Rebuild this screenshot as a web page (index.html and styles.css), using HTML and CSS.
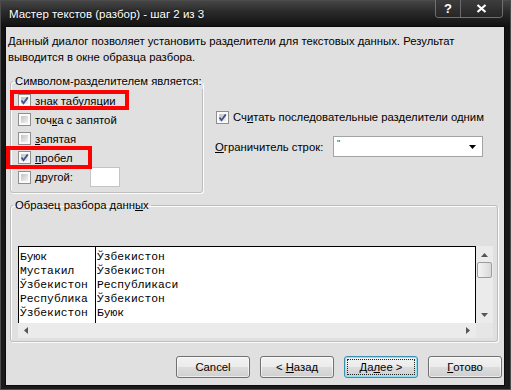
FILE: index.html
```html
<!DOCTYPE html>
<html lang="ru">
<head>
  <meta charset="UTF-8">
  <title>Мастер текстов (разбор) - шаг 2 из 3</title>
  <link rel="stylesheet" href="styles.css">
</head>
<body>
  <div class="window">
    <div class="titlebar">
      <span class="title">Мастер текстов (разбор) - шаг 2 из 3</span>
      <div class="caption">
        <span class="cap-btn help">?</span>
        <span class="cap-btn close">
          <svg width="11" height="9" viewBox="0 0 11 9"><path d="M1.5 1 L9.5 8 M9.5 1 L1.5 8" stroke="#fff" stroke-width="2.2"/></svg>
        </span>
      </div>
    </div>

    <div class="client">
      <p class="intro">Данный диалог позволяет установить разделители для текстовых данных. Результат<br>выводится в окне образца разбора.</p>

      <div class="options">
        <fieldset class="group delimiters">
          <legend>Символом-разделителем является:</legend>
          <div class="check-row">
            <span class="box"><svg viewBox="0 0 13 13"><path d="M3.5 6.5 L5.5 9.2 L9.8 3.4" fill="none" stroke="#3e5590" stroke-width="1.8"/></svg></span>
            <span>знак <u>т</u>абуляции</span>
            <span class="mark mark-tab"></span>
          </div>
          <div class="check-row">
            <span class="box"></span>
            <span>точ<u>к</u>а с запятой</span>
          </div>
          <div class="check-row">
            <span class="box"></span>
            <span><u>з</u>апятая</span>
          </div>
          <div class="check-row">
            <span class="box"><svg viewBox="0 0 13 13"><path d="M3.5 6.5 L5.5 9.2 L9.8 3.4" fill="none" stroke="#3e5590" stroke-width="1.8"/></svg></span>
            <span><u>п</u>робел</span>
            <span class="mark mark-space"></span>
          </div>
          <div class="check-row other">
            <span class="box"></span>
            <span><u>д</u>ругой:</span>
            <span class="other-input"></span>
          </div>
        </fieldset>

        <div class="side">
          <div class="check-row consecutive">
            <span class="box"><svg viewBox="0 0 13 13"><path d="M3.5 6.5 L5.5 9.2 L9.8 3.4" fill="none" stroke="#3e5590" stroke-width="1.8"/></svg></span>
            <span>Сч<u>и</u>тать последовательные разделители одним</span>
          </div>
          <div class="qualifier">
            <span class="qualifier-label"><u>О</u>граничитель строк:</span>
            <div class="combo">
              <span class="combo-value">"</span>
              <svg width="7" height="4" viewBox="0 0 7 4"><path d="M0 0 H7 L3.5 4 Z" fill="#000"/></svg>
            </div>
          </div>
        </div>
      </div>

      <fieldset class="group preview">
        <legend>Образец разбора данн<u>ы</u>х</legend>
        <div class="preview-box">
          <div class="data">
            <div class="col col-first">
              <div>Буюк</div>
              <div>Мустакил</div>
              <div>Ўзбекистон</div>
              <div>Республика</div>
              <div>Ўзбекистон</div>
            </div>
            <div class="col">
              <div>Ўзбекистон</div>
              <div>Ўзбекистон</div>
              <div>Республикаси</div>
              <div>Ўзбекистон</div>
              <div>Буюк</div>
            </div>
          </div>
          <div class="vscroll">
            <svg width="7" height="4" viewBox="0 0 7 4"><path d="M0 4 H7 L3.5 0 Z" fill="#555"/></svg>
            <span class="thumb"></span>
            <span class="vspace"></span>
            <svg width="7" height="4" viewBox="0 0 7 4"><path d="M0 0 H7 L3.5 4 Z" fill="#555"/></svg>
          </div>
          <div class="hscroll">
            <svg width="4" height="7" viewBox="0 0 4 7"><path d="M4 0 V7 L0 3.5 Z" fill="#555"/></svg>
            <svg width="4" height="7" viewBox="0 0 4 7"><path d="M0 0 V7 L4 3.5 Z" fill="#555"/></svg>
          </div>
          <div class="corner"></div>
        </div>
      </fieldset>

      <div class="buttons">
        <span class="btn">Cancel</span>
        <span class="btn">&lt;&nbsp;<u>Н</u>азад</span>
        <span class="btn default">Да<u>л</u>ее&nbsp;&gt;</span>
        <span class="btn"><u>Г</u>отово</span>
      </div>
    </div>
  </div>
</body>
</html>
```

FILE: styles.css
```css
body {
  margin: 0;
  font-family: "Liberation Sans", Arial, sans-serif;
  font-size: 11.3px;
  color: #000;
  background: #111;
}
.window {
  width: 511px;
  height: 390px;
  box-sizing: border-box;
  padding: 0 7px 5px 6px;
  display: flex;
  flex-direction: column;
  background: linear-gradient(#474747 0px, #2a2a2a 12px, #121212 26px, #1b1b1b 100%);
  box-shadow: inset 0 0 0 1px #4c4c4c;
}
.titlebar {
  flex: none;
  height: 27px;
  display: flex;
  justify-content: space-between;
  padding-left: 3px;
}
.title {
  color: #fff;
  font-size: 11.5px;
  line-height: 29px;
  text-shadow: 0 0 3px rgba(0, 0, 0, 0.8);
}
.caption {
  display: flex;
  height: 18px;
  margin-right: 1px;
  box-sizing: border-box;
  border: 1px solid #707070;
  border-top: none;
  border-radius: 0 0 4px 4px;
  overflow: hidden;
  box-shadow: inset 0 0 0 1px #1c1c1c;
}
.cap-btn {
  display: flex;
  align-items: center;
  justify-content: center;
  background: linear-gradient(#3d3d3d, #262626);
  color: #fff;
  font-weight: bold;
  font-size: 13px;
}
.help {
  width: 24px;
}
.close {
  width: 41px;
  border-left: 1px solid #6a6a6a;
}
.client {
  flex: 1;
  min-height: 0;
  background: #e0e0e0;
  box-shadow: 0 0 0 1px #0b0b0b;
  padding: 0 2px 0 0;
}
.intro {
  margin: 0;
  padding: 6px 2px 0;
  line-height: 16px;
}
.options {
  display: flex;
  margin-top: 8px;
}
.group {
  margin: 0 0 0 4px;
  border: 1px solid #bdbdbd;
  border-radius: 3px;
  box-shadow: inset 1px 1px 0 #fbfbfb, 1px 1px 0 #fbfbfb;
  min-width: 0;
}
.group legend {
  margin-left: -5px;
  padding: 0 2px;
  line-height: 16px;
  white-space: nowrap;
}
.delimiters {
  width: 193px;
  box-sizing: border-box;
  padding: 2px 0 5px 7px;
}
.check-row {
  position: relative;
  display: flex;
  align-items: center;
  gap: 4px;
  height: 19px;
  white-space: nowrap;
}
.check-row.other {
  height: 20px;
}
.box {
  flex: none;
  width: 13px;
  height: 13px;
  box-sizing: border-box;
  border: 1px solid #8e8f8f;
  padding: 2px;
  background: linear-gradient(135deg, #c2c2c2, #f2f2f2) content-box, #fafafa;
}
.box svg {
  display: block;
  width: 13px;
  height: 13px;
  margin: -3px;
}
.mark {
  position: absolute;
  box-sizing: border-box;
  border: 4px solid #f00;
  z-index: 2;
}
.mark-tab {
  left: -8px;
  top: -1px;
  width: 119px;
  height: 20px;
}
.mark-space {
  left: -12px;
  top: -2px;
  width: 86px;
  height: 23px;
}
.other-input {
  width: 30px;
  height: 20px;
  box-sizing: border-box;
  margin-left: 13px;
  background: #fff;
  border: 1px solid #c4c4c4;
}
.side {
  display: flex;
  flex-direction: column;
  margin-left: 12px;
  padding-top: 36px;
}
.consecutive {
  height: 16px;
  padding-left: 1px;
}
.qualifier {
  display: flex;
  align-items: center;
  margin-top: 11px;
}
.qualifier-label {
  width: 118px;
}
.combo {
  width: 150px;
  height: 21px;
  box-sizing: border-box;
  border: 1px solid #a3a3a3;
  background: #fff;
  display: flex;
  justify-content: space-between;
  align-items: center;
  padding: 0 6px 0 3px;
}
.combo-value {
  font-size: 9px;
  align-self: flex-start;
  color: #444;
  line-height: 12px;
}
.preview {
  margin: 4px 4px 0;
  padding: 33px 6px 3px 7px;
}
.preview-box {
  display: grid;
  grid-template-columns: 458px 17px;
  grid-template-rows: 77px 15px;
}
.data {
  display: flex;
  background: #fff;
  border: 1px solid #000;
  border-bottom: none;
  font-family: "Liberation Mono", "Courier New", monospace;
  font-size: 11.3px;
  line-height: 14px;
}
.col {
  padding: 3px 0 0 1px;
}
.col-first {
  width: 75px;
  border-right: 1px solid #000;
}
.vscroll {
  background: #ebebeb;
  display: flex;
  flex-direction: column;
  align-items: center;
  padding: 7px 0 6px;
  box-sizing: border-box;
}
.thumb {
  width: 15px;
  height: 16px;
  box-sizing: border-box;
  margin-top: 5px;
  border: 1px solid #9c9c9c;
  border-radius: 2px;
  background: linear-gradient(90deg, #f4f4f4, #d9d9d9);
}
.vspace {
  flex: 1;
}
.hscroll {
  background: #ebebeb;
  display: flex;
  justify-content: space-between;
  align-items: center;
  padding: 0 6px;
}
.corner {
  background: #e6e6e6;
}
.buttons {
  display: flex;
  justify-content: flex-end;
  gap: 10px;
  margin-top: 14px;
}
.btn {
  position: relative;
  width: 74px;
  height: 22px;
  box-sizing: border-box;
  display: flex;
  align-items: center;
  justify-content: center;
  border: 1px solid #707070;
  border-radius: 3px;
  background: linear-gradient(#f2f2f2 0%, #ebebeb 50%, #dddddd 50%, #cfcfcf 100%);
  box-shadow: inset 0 0 0 1px rgba(255, 255, 255, 0.6);
}
.btn.default {
  border-color: #3c8fb1;
  box-shadow: inset 0 0 0 1px #8fe0f4;
}
.btn.default::after {
  content: "";
  position: absolute;
  inset: 2px;
  border: 1px dotted #222;
}
```
